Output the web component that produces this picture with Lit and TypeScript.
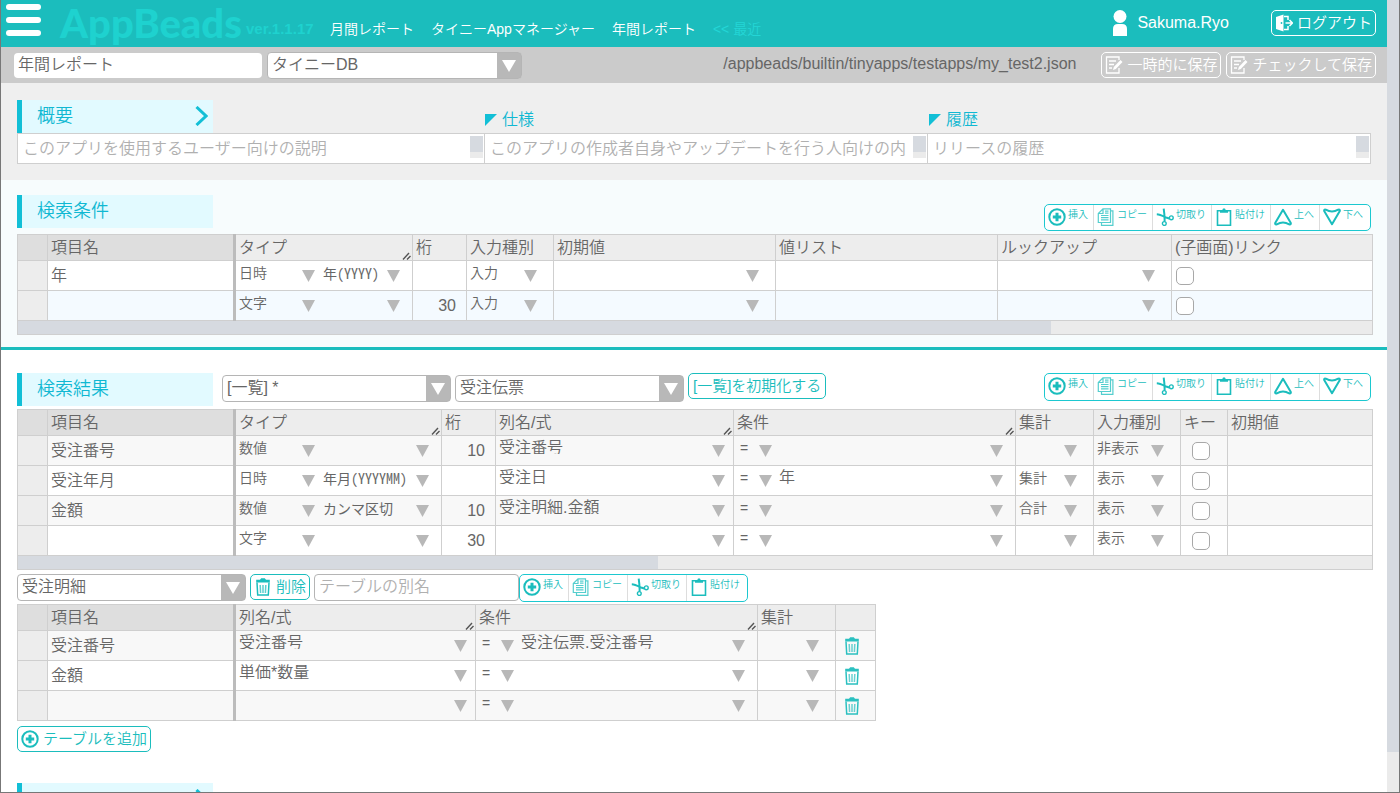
import { LitElement, html, css, svg, nothing } from "lit";
import { customElement } from "lit/decorators.js";
import { classMap } from "lit/directives/class-map.js";

type Cell =
  | { kind: "name"; value?: string }
  | { kind: "number"; value?: string }
  | { kind: "text"; value?: string }
  | { kind: "type"; value?: string; format?: string }
  | { kind: "select"; value?: string; size?: "formula" }
  | { kind: "condition"; value?: string }
  | { kind: "check"; centered?: boolean }
  | { kind: "trash" };

interface Column { label: string; width?: number; grip?: boolean; }

const name = (value = ""): Cell => ({ kind: "name", value });
const num = (value = ""): Cell => ({ kind: "number", value });
const type = (value: string, format = ""): Cell => ({ kind: "type", value, format });
const pick = (value = ""): Cell => ({ kind: "select", value });
const formula = (value = ""): Cell => ({ kind: "select", value, size: "formula" });
const cond = (value = ""): Cell => ({ kind: "condition", value });
const text = (): Cell => ({ kind: "text" });

const conditionColumns: Column[] = [
  { label: "項目名", width: 187 },
  { label: "タイプ", width: 178, grip: true },
  { label: "桁", width: 54 },
  { label: "入力種別", width: 87 },
  { label: "初期値", width: 222 },
  { label: "値リスト", width: 222 },
  { label: "ルックアップ", width: 174 },
  { label: "(子画面)リンク" },
];
const conditionRows: Cell[][] = [
  [name("年"), type("日時", "年(YYYY)"), num(), pick("入力"), pick(), text(), pick(), { kind: "check" }],
  [name(), type("文字"), num("30"), pick("入力"), pick(), text(), pick(), { kind: "check" }],
];

const resultColumns: Column[] = [
  { label: "項目名", width: 187 },
  { label: "タイプ", width: 207, grip: true },
  { label: "桁", width: 54 },
  { label: "列名/式", width: 238, grip: true },
  { label: "条件", width: 282, grip: true },
  { label: "集計", width: 78 },
  { label: "入力種別", width: 87 },
  { label: "キー", width: 47 },
  { label: "初期値" },
];
const key: Cell = { kind: "check", centered: true };
const resultRows: Cell[][] = [
  [name("受注番号"), type("数値"), num("10"), formula("受注番号"), cond(), pick(), pick("非表示"), key, text()],
  [name("受注年月"), type("日時", "年月(YYYYMM)"), num(), formula("受注日"), cond("年"), pick("集計"), pick("表示"), key, text()],
  [name("金額"), type("数値", "カンマ区切"), num("10"), formula("受注明細.金額"), cond(), pick("合計"), pick("表示"), key, text()],
  [name(), type("文字"), num("30"), formula(), cond(), pick(), pick("表示"), key, text()],
];

const joinColumns: Column[] = [
  { label: "項目名", width: 187 },
  { label: "列名/式", width: 241, grip: true },
  { label: "条件", width: 282, grip: true },
  { label: "集計", width: 78 },
  { label: "", width: 40 },
];
const joinRows: Cell[][] = [
  [name("受注番号"), formula("受注番号"), cond("受注伝票.受注番号"), pick(), { kind: "trash" }],
  [name("金額"), formula("単価*数量"), cond(), pick(), { kind: "trash" }],
  [name(), formula(), cond(), pick(), { kind: "trash" }],
];

const shapes = {
  plus: svg`<circle cx="9" cy="9" r="7.7" fill="none" stroke="currentColor" stroke-width="2"/><path d="M9 4.8v8.4M4.8 9h8.4" stroke="currentColor" stroke-width="3"/>`,
  copy: svg`<path d="M6 .8h7.500v13.700H1.300V5.500z M6 .8v4.700H1.300 M13.500 2.800h2.400v14.500H4.500v-2.800 M4 7.500h7.500M4 9.700h7.500M4 11.900h7.500M8 5.200h3.500M8 3.200h3.500" fill="none" stroke="currentColor" stroke-width="1.200" opacity=".75"/>`,
  cut: svg`<path d="M.8 6.300c3 .2 6 1.700 9.300 3.200l3.200 1M7.700.6c.5 3.500.9 7 .9 10.500v2.500" fill="none" stroke="currentColor" stroke-width="2"/><circle cx="15.300" cy="9.800" r="1.900" fill="none" stroke="currentColor" stroke-width="1.400"/><circle cx="8.300" cy="15.500" r="1.900" fill="none" stroke="currentColor" stroke-width="1.400"/>`,
  paste: svg`<path d="M2.500 2.700h13v14.500h-13z" fill="none" stroke="currentColor" stroke-width="1.600"/><path d="M5 4.800V2.300h2.200L8 .6h2l.8 1.700H13v2.500z" fill="currentColor"/>`,
  up: svg`<path d="M9 1.800L16.800 15Q17.200 17 15.200 16.300Q9 12.700 2.800 16.300Q.8 17 1.200 15z" fill="none" stroke="currentColor" stroke-width="2" stroke-linejoin="round"/>`,
  down: svg`<path d="M9 16.200L16.800 3Q17.200 1 15.200 1.700Q9 5.300 2.800 1.700Q.8 1 1.200 3z" fill="none" stroke="currentColor" stroke-width="2" stroke-linejoin="round"/>`,
  trash: svg`<path d="M6 1.800L7.200.3h3.600L12 1.800h3.800v2.700H2.200V1.800z" fill="currentColor"/><path d="M3 4.500l.7 12.500h10.600L15 4.500" fill="none" stroke="currentColor" stroke-width="1.500"/><path d="M6.200 7l.4 8M9 7v8M11.800 7l-.4 8" stroke="currentColor" stroke-width="1.500" opacity=".7"/>`,
  door: svg`<path d="M1 3l7.500-2.500v17L1 15z" fill="currentColor"/><circle cx="6.500" cy="9" r=".9" fill="#1bbdbd"/><path d="M9 2.500h4V6M9 15.500h4V12M10.500 9h6.500M14.500 6l3 3-3 3" fill="none" stroke="currentColor" stroke-width="1.500"/>`,
  edit: svg`<path d="M14 4V1H1.500v16H14v-5" fill="none" stroke="currentColor" stroke-width="1.300"/><path d="M4 5h7M4 8.500h5M4 12h3" stroke="currentColor" stroke-width="1.300"/><path d="M8 14l.8-3L15.500 4l2 1.900-6.700 7z" fill="currentColor"/>`,
};
type Icon = keyof typeof shapes;
const icon = (id: Icon) => html`<svg class="icon" viewBox="0 0 18 18" aria-hidden="true">${shapes[id]}</svg>`;

const tools: { id: Icon; label: string }[] = [
  { id: "plus", label: "挿入" },
  { id: "copy", label: "コピー" },
  { id: "cut", label: "切取り" },
  { id: "paste", label: "貼付け" },
  { id: "up", label: "上へ" },
  { id: "down", label: "下へ" },
];

@customElement("app-root")
export class AppRoot extends LitElement {
  static styles = css`
    :host {
      display: block;
      --teal: #1bbdbd;
      --accent: #12bfd6;
      --line: #cfcfcf;
      font: 350 16px/24px "Liberation Sans", "Noto Sans CJK JP", sans-serif;
      color: #666;
    }
    * { box-sizing: border-box; }
    button, input, select, textarea { font: inherit; color: inherit; margin: 0; border-radius: 0; }
    .frame { display: flex; height: 100vh; overflow: hidden; border: solid #777; border-width: 0 1px 1px; background: #fff; }
    .page { flex: 1; min-width: 0; }
    .page-scroll { width: 12px; background: #ebebeb; }
    .page-thumb { height: 95%; background: #d6dae0; }
    .icon { width: 18px; height: 18px; flex: none; display: block; }

    .header { display: flex; align-items: center; height: 47px; padding: 0 11px 2px 5px; background: var(--teal); color: #fff; }
    .menu { display: grid; gap: 7px; width: 35px; padding: 0; border: 0; background: none; align-self: flex-start; margin-top: 4px; }
    .bar { height: 6px; border-radius: 3px; background: #fff; }
    .logo { margin-left: 19px; font: 900 40px/40px Lato, sans-serif; color: #1ed2cf; width: 182px; white-space: nowrap; }
    .version { width: 84px; margin-left: 4px; font-weight: 700; font-size: 15px; color: #1ed2cf; padding-top: 12px; }
    .nav { display: flex; gap: 17px; flex: 1; font-size: 14px; padding-top: 12px; white-space: nowrap; }
    .nav a { color: inherit; text-decoration: none; }
    .nav .recent { color: #23d6d6; }
    .user { display: flex; align-items: center; gap: 8px; margin-right: 42px; }
    .person { width: 18px; height: 26px; }
    .pill { display: inline-flex; align-items: center; gap: 4px; height: 26px; padding: 0 3px; border: 1px solid currentColor; border-radius: 5px; background: none; font-size: 15px; line-height: 24px; white-space: nowrap; color: var(--teal); }
    .pill.light { color: #fff; }
    .pill.roomy { padding: 0 4px; }

    .docbar { display: flex; align-items: center; height: 36px; padding: 0 11px 0 13px; background: #cbcbcb; gap: 5px; }
    .docname { width: 248px; height: 25px; padding: 0 4px 5px; border: 0; border-radius: 4px; background: #fff; }
    .path { flex: 1; text-align: right; padding: 0 20px 2px 0; }

    .combo { width: 229px; height: 27px; padding: 0 30px 3px 4px; appearance: none; border: 1px solid #b5b5b5; border-radius: 4px;
      background: #fff url('data:image/svg+xml,<svg xmlns="http://www.w3.org/2000/svg" width="24" height="25"><path fill="%23b8b8b8" d="M0 0h24v25H0z"/><path fill="white" d="M5 7h14l-7 12z"/></svg>') no-repeat right center; }
    .combo.kind { width: 255px; padding-bottom: 6px; }

    .overview { background: #efefef; padding: 17px 16px 16px; }
    .titles { display: grid; grid-template-columns: 466px 1fr 1fr; align-items: end; }
    .title { display: flex; align-items: center; justify-content: space-between; width: 196px; height: 33px; margin: 0; padding: 0 5px 2px 15px; border-left: 5px solid var(--accent); background: #e2faff; color: #10b8d2; font-size: 18px; font-weight: inherit; line-height: 28px; }
    .chevron { width: 13px; height: 20px; }
    .caption { display: flex; align-items: center; gap: 5px; margin-left: 2px; color: #10b8d2; line-height: 26px; }
    .corner { width: 12px; height: 12px; }
    .notes { display: grid; grid-template-columns: 466px 1fr 1fr; border: 1px solid var(--line); background: #fff; }
    .note { display: flex; padding: 2px 1px 2px 5px; }
    .note + .note { border-left: 1px solid var(--line); }
    .note textarea { flex: 1; min-width: 0; height: 25px; padding: 1px 0; border: 0; resize: none; overflow: hidden; background: none; }
    ::placeholder { color: #b0b0b0; opacity: 1; }
    .mini { width: 13px; height: 22px; background: #ebebeb; }
    .mini-thumb { height: 16px; background: #d6dae0; }

    .conditions { background: #f7fcfd; padding: 15px 14px 12px 16px; border-bottom: 3px solid var(--teal); }
    .results { padding: 23px 14px 0 16px; }
    .bar-row { display: flex; align-items: flex-start; gap: 4px; height: 36px; }
    .conditions .bar-row { height: 39px; }
    .conditions .toolbar { margin-top: 9px; height: 27px; }
    .bar-row .combo { margin-top: 2px; }
    .bar-row .title { margin-right: 5px; }
    .push { margin-left: auto; margin-right: 2px; }

    .toolbar { display: flex; height: 28px; border: 1px solid #1cc8d0; border-radius: 5px; background: #fff; }
    .tool { display: flex; align-items: flex-start; gap: 2px; padding: 3px 5px 0 3px; border: 0; background: none; font-size: 10px; line-height: 14px; color: var(--teal); white-space: nowrap; }
    .tool + .tool { border-left: 1px solid #ddd; }
    .tool:last-child { padding-right: 7px; }

    .grid { width: 100%; table-layout: fixed; border-collapse: collapse; background: #fff; border: 1px solid var(--line); }
    .grid.fit { width: 859px; }
    .lead { width: 30px; }
    th { height: 26px; padding: 0; border: 1px solid var(--line); background: #ededed; font-weight: inherit; text-align: left; }
    td { height: 30px; padding: 0; border: 1px solid var(--line); }
    th.lead-head, th.named { background: #dedede; }
    .named { border-right: 3px solid #bcbcbc; }
    .row-head { background: #ededed; }
    .head { display: flex; justify-content: space-between; height: 25px; padding: 0 1px 0 3px; white-space: nowrap; line-height: 25px; }
    .grip { width: 9px; height: 8px; align-self: flex-end; }
    .striped tr:nth-child(odd) td { background: #f8f8f8; }
    .tinted tr:nth-child(even) td { background: #f4faff; }
    .striped tr td.row-head, .tinted tr td.row-head { background: #ededed; }
    .field { display: block; width: 100%; height: 29px; padding: 0 3px 3px; border: 0; background: none; outline: none; }
    .field.number { text-align: right; padding: 0 10px 0 3px; }
    .cell { display: flex; height: 29px; padding-right: 12px; }
    .cell.near { padding-right: 8px; }
    .cell.flush { padding-right: 4px; }
    .drop { flex: 1; min-width: 0; height: 29px; padding: 0 17px 8px 3px; border: 0; appearance: none; font-size: 14px;
      background: url('data:image/svg+xml,<svg xmlns="http://www.w3.org/2000/svg" width="13" height="12"><path fill="%23b8b8b8" d="M0 0h13L6.500 12z"/></svg>') no-repeat right 4px center; }
    .drop.large { font-size: 16px; padding-bottom: 11px; }
    .drop.format { padding-left: 4px; font-family: "Noto Sans Mono CJK JP", "Liberation Sans", "Noto Sans CJK JP", sans-serif; }
    .drop.kind { flex: none; width: 83px; }
    .drop.op { flex: none; width: 42px; padding-left: 6px; }
    .check { display: flex; align-items: center; height: 29px; padding-left: 4px; }
    .check.centered { padding-left: 0; justify-content: center; padding-right: 6px; }
    .check input { appearance: none; width: 18px; height: 18px; border: 1px solid #a8a8a8; border-radius: 5px; background: #fff; }
    .bin { display: grid; place-items: center; width: 32px; height: 29px; padding: 0; border: 0; background: none; color: #2bc0c0; }
    .scroll { height: 14px; background: #ebebeb; border: 1px solid var(--line); border-top: 0; }
    .thumb { height: 13px; background: #d6dae0; }

    .join-bar { display: flex; gap: 4px; margin-top: 4px; height: 30px; align-items: flex-start; }
    .join-bar .toolbar { margin-left: -4px; }
    .alias { width: 205px; height: 27px; padding: 0 4px 2px; border: 1px solid #b5b5b5; border-radius: 4px; }
    .add { margin: 5px 0 31px; }
    .below { padding-left: 16px; }
    .below .title { justify-content: flex-end; }
  `;

  private chevron() {
    return html`<svg class="chevron" viewBox="0 0 13 20" aria-hidden="true"><path d="M1.500 1L11 10 1.500 19" fill="none" stroke="#12bfd6" stroke-width="3"/></svg>`;
  }

  private toolbar(count: number, push = false) {
    return html`<div class=${classMap({ toolbar: true, push })} role="toolbar">
      ${tools.slice(0, count).map((t) => html`<button class="tool" type="button">${icon(t.id)}${t.label}</button>`)}
    </div>`;
  }

  private drop(label: string, value = "", extra = "") {
    return html`<select class="drop ${extra}" aria-label=${label}><option>${value}</option></select>`;
  }

  private cell(c: Cell, label: string) {
    switch (c.kind) {
      case "name":
        return html`<td class="named"><input class="field" aria-label=${label} .value=${c.value ?? ""} /></td>`;
      case "number":
        return html`<td><input class="field number" aria-label=${label} .value=${c.value ?? ""} /></td>`;
      case "text":
        return html`<td><input class="field" aria-label=${label} /></td>`;
      case "type":
        return html`<td><div class="cell near">${this.drop(label, c.value, "kind")}${this.drop("書式", c.format, "format")}</div></td>`;
      case "select":
        return html`<td><div class=${classMap({ cell: true, flush: c.size === "formula" })}>${this.drop(label, c.value, c.size ? "large" : "")}</div></td>`;
      case "condition":
        return html`<td><div class="cell near">${this.drop("演算子", "=", "op")}${this.drop(label, c.value, "large")}</div></td>`;
      case "check":
        return html`<td><div class=${classMap({ check: true, centered: !!c.centered })}><input type="checkbox" aria-label=${label} /></div></td>`;
      case "trash":
        return html`<td><button class="bin" type="button" aria-label="削除">${icon("trash")}</button></td>`;
    }
  }

  private grid(columns: Column[], rows: Cell[][], style: "striped" | "tinted", fit = false) {
    return html`<table class=${classMap({ grid: true, fit })}>
      <colgroup>
        <col class="lead" />
        ${columns.map((c) => (c.width ? html`<col width=${c.width} />` : html`<col />`))}
      </colgroup>
      <thead><tr>
        <th class="lead-head"></th>
        ${columns.map((c, i) => html`<th class=${classMap({ named: i === 0 })} scope="col"><div class="head">${c.label}${c.grip
          ? html`<svg class="grip" viewBox="0 0 9 8" aria-hidden="true"><path d="M1 7.500L7 1M5 7.500L8.500 4" stroke="#555" stroke-width="1.400"/></svg>`
          : nothing}</div></th>`)}
      </tr></thead>
      <tbody class=${style}>
        ${rows.map((r) => html`<tr><td class="row-head"></td>${r.map((c, i) => this.cell(c, columns[i].label))}</tr>`)}
      </tbody>
    </table>`;
  }

  private scroll(percent: number) {
    return html`<div class="scroll"><div class="thumb" style="width:${percent}%"></div></div>`;
  }

  private note(label: string, placeholder: string) {
    return html`<div class="note"><textarea rows="1" aria-label=${label} placeholder=${placeholder}></textarea><div class="mini"><div class="mini-thumb"></div></div></div>`;
  }

  private caption(label: string) {
    return html`<div class="caption"><svg class="corner" viewBox="0 0 12 12" aria-hidden="true"><path d="M0 0h12L0 12z" fill="#12bfd6"/></svg>${label}</div>`;
  }

  render() {
    return html`<div class="frame">
      <div class="page">
        <header class="header">
          <button class="menu" type="button" aria-label="メニュー"><span class="bar"></span><span class="bar"></span><span class="bar"></span></button>
          <div class="logo">AppBeads</div>
          <div class="version">ver.1.1.17</div>
          <nav class="nav">
            <a href="#">月間レポート</a><a href="#">タイニーAppマネージャー</a><a href="#">年間レポート</a><a class="recent" href="#">&lt;&lt; 最近</a>
          </nav>
          <div class="user"><svg class="person" viewBox="0 0 18 26" aria-hidden="true"><circle cx="9" cy="6.500" r="6.500" fill="#fff"/><path d="M2 26V19q0-5 5-5h4q5 0 5 5v7z" fill="#fff"/></svg>Sakuma.Ryo</div>
          <button class="pill light" type="button">${icon("door")}ログアウト</button>
        </header>
        <div class="docbar">
          <input class="docname" aria-label="アプリ名" .value=${"年間レポート"} />
          <select class="combo kind" aria-label="種類"><option>タイニーDB</option></select>
          <span class="path">/appbeads/builtin/tinyapps/testapps/my_test2.json</span>
          <button class="pill light" type="button">${icon("edit")}一時的に保存</button>
          <button class="pill light" type="button">${icon("edit")}チェックして保存</button>
        </div>
        <section class="overview">
          <div class="titles">
            <h2 class="title">概要${this.chevron()}</h2>
            ${this.caption("仕様")}${this.caption("履歴")}
          </div>
          <div class="notes">
            ${this.note("概要", "このアプリを使用するユーザー向けの説明")}
            ${this.note("仕様", "このアプリの作成者自身やアップデートを行う人向けの内容")}
            ${this.note("履歴", "リリースの履歴")}
          </div>
        </section>
        <section class="conditions">
          <div class="bar-row"><h2 class="title">検索条件</h2>${this.toolbar(6, true)}</div>
          ${this.grid(conditionColumns, conditionRows, "tinted")}
          ${this.scroll(76.3)}
        </section>
        <section class="results">
          <div class="bar-row">
            <h2 class="title">検索結果</h2>
            <select class="combo" aria-label="一覧"><option>[一覧] *</option></select>
            <select class="combo" aria-label="テーブル"><option>受注伝票</option></select>
            <button class="pill roomy" type="button">[一覧]を初期化する</button>
            ${this.toolbar(6, true)}
          </div>
          ${this.grid(resultColumns, resultRows, "striped")}
          ${this.scroll(47.3)}
          <div class="join-bar">
            <select class="combo" aria-label="結合テーブル"><option>受注明細</option></select>
            <button class="pill" type="button">${icon("trash")}削除</button>
            <input class="alias" aria-label="テーブルの別名" placeholder="テーブルの別名" />
            ${this.toolbar(4)}
          </div>
          ${this.grid(joinColumns, joinRows, "striped", true)}
          <button class="pill add" type="button">${icon("plus")}テーブルを追加</button>
        </section>
        <section class="below"><div class="title">${this.chevron()}</div></section>
      </div>
      <div class="page-scroll"><div class="page-thumb"></div></div>
    </div>`;
  }
}
